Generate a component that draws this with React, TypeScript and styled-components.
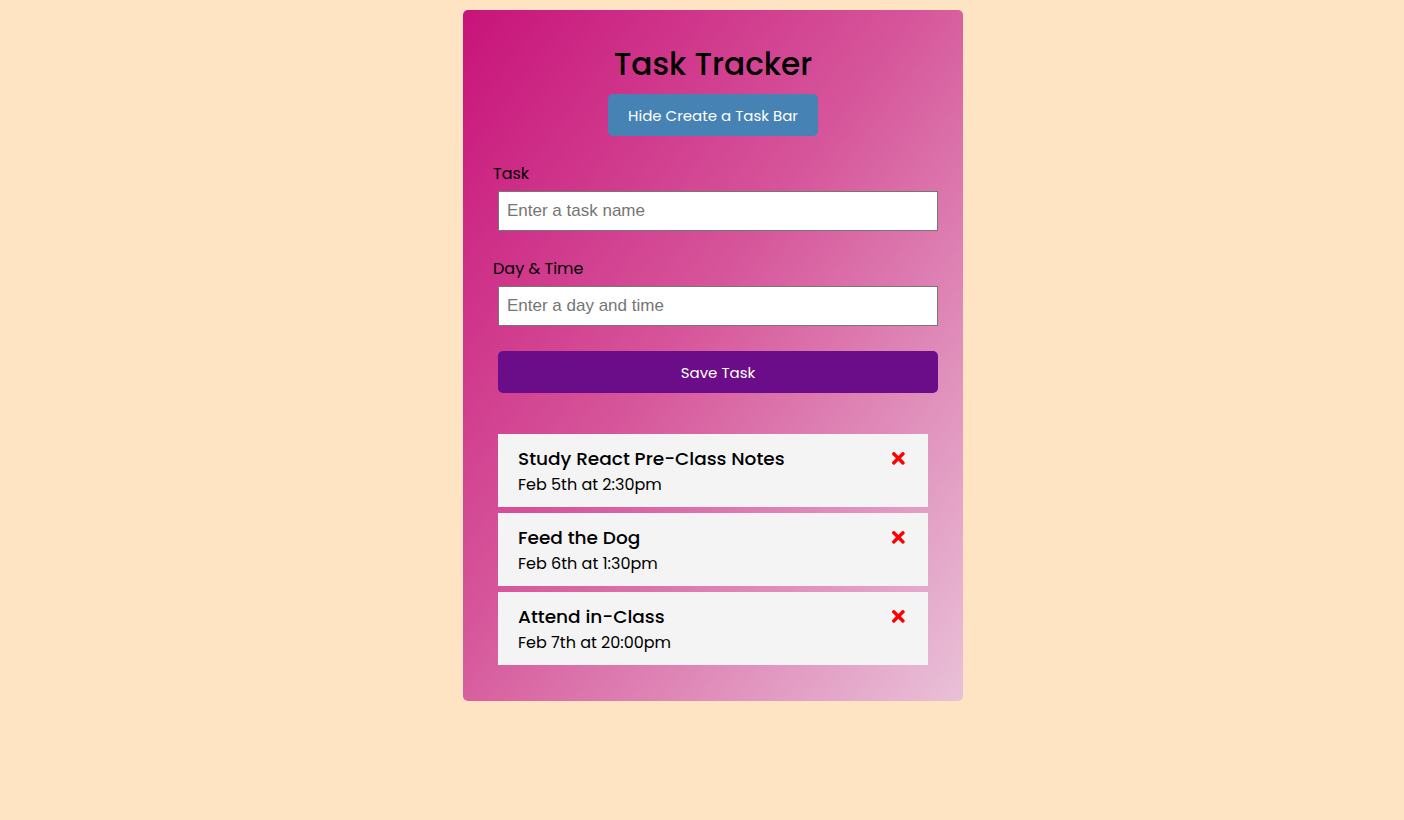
import React from "react";
import styled, { createGlobalStyle } from "styled-components";
import { FaTimes } from "react-icons/fa";

const GlobalStyle = createGlobalStyle`
  * { box-sizing: border-box; }
  body {
    margin: 0;
    background: #ffe4c4;
    font-family: "Poppins", "Inter", "Noto Sans", sans-serif;
  }
`;

const Page = styled.div`
  padding: 10px 0 10px 22px;
`;

const Container = styled.div`
  width: 500px;
  margin: 0 auto;
  padding: 30px 30px 31px;
  border-radius: 5px;
  background: linear-gradient(to bottom right, #c8137a 0%, #d6559a 45%, #e9c1d8 100%);
`;

const Header = styled.header`
  display: flex;
  flex-direction: column;
  align-items: center;
`;

const Title = styled.h1`
  margin: 0;
  font-size: 31.2px;
  line-height: 48px;
  font-weight: 500;
  color: #000;
`;

const Button = styled.button<{ $bg: string; $block?: boolean }>`
  display: block;
  width: ${(p) => (p.$block ? "440px" : "210px")};
  height: 42px;
  margin: ${(p) => (p.$block ? "25px 5px 0" : "6px 0 0")};
  padding: 0 20px;
  border: none;
  border-radius: 5px;
  background: ${(p) => p.$bg};
  color: #fff;
  font-family: inherit;
  font-size: 15px;
  cursor: pointer;
`;

const Form = styled.form`
  margin-top: 25px;
`;

const Field = styled.div<{ $first?: boolean }>`
  margin-top: ${(p) => (p.$first ? "0" : "25px")};
`;

const Label = styled.label`
  display: block;
  height: 25px;
  font-size: 16px;
  line-height: 25px;
  color: #000;
`;

const Input = styled.input`
  display: block;
  width: 440px;
  height: 40px;
  margin: 5px 5px 0;
  padding: 3px 8px;
  border: 1px solid #767676;
  border-radius: 0;
  font-family: "Liberation Sans", Arial, sans-serif;
  font-size: 17px;
  background: #fff;
  &::placeholder { color: #757575; }
`;

const TaskList = styled.div`
  display: flex;
  flex-direction: column;
  gap: 6px;
  margin: 41px 5px 5px;
`;

const TaskCard = styled.div`
  background: #f4f4f4;
  padding: 10px 20px;
  width: 430px;
`;

const TaskTitle = styled.h3`
  display: flex;
  align-items: center;
  justify-content: space-between;
  margin: 0;
  height: 28px;
  font-size: 18.5px;
  font-weight: 500;
  color: #000;
`;

const TaskDate = styled.p`
  margin: 0;
  font-size: 16px;
  line-height: 25px;
  color: #000;
`;

const Remove = styled(FaTimes)`
  color: red;
  width: 18.72px;
  height: 18.72px;
  cursor: pointer;
`;

const tasks = [
  { id: 1, text: "Study React Pre-Class Notes", day: "Feb 5th at 2:30pm" },
  { id: 2, text: "Feed the Dog", day: "Feb 6th at 1:30pm" },
  { id: 3, text: "Attend in-Class", day: "Feb 7th at 20:00pm" },
];

export default function App() {
  return (
    <Page>
      <GlobalStyle />
      <Container>
        <Header>
          <Title>Task Tracker</Title>
          <Button $bg="#4682b4">Hide Create a Task Bar</Button>
        </Header>
        <Form onSubmit={(e) => e.preventDefault()}>
          <Field $first>
            <Label>Task</Label>
            <Input type="text" placeholder="Enter a task name" />
          </Field>
          <Field>
            <Label>Day &amp; Time</Label>
            <Input type="text" placeholder="Enter a day and time" />
          </Field>
          <Button $bg="#6b0d88" $block type="submit">Save Task</Button>
        </Form>
        <TaskList>
          {tasks.map((t) => (
            <TaskCard key={t.id}>
              <TaskTitle>
                {t.text}
                <Remove />
              </TaskTitle>
              <TaskDate>{t.day}</TaskDate>
            </TaskCard>
          ))}
        </TaskList>
      </Container>
    </Page>
  );
}
